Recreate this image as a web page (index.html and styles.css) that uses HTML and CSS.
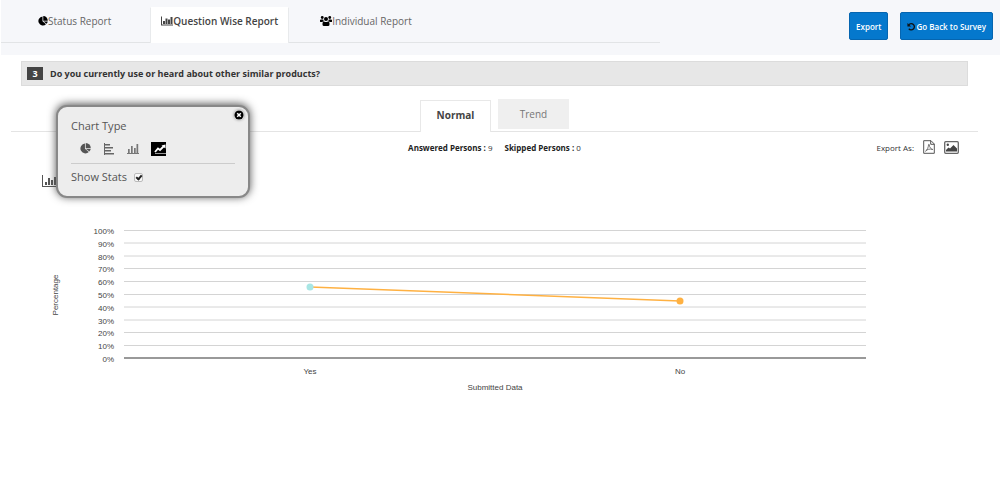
FILE: index.html
```html
<!DOCTYPE html>
<html lang="en">
<head>
<meta charset="utf-8">
<title>Question Wise Report</title>
<link rel="stylesheet" href="styles.css">
</head>
<body>
<header class="topbar">
  <nav class="tabs">
    <a class="tab" href="#status"><svg class="tab-icon" viewBox="0 0 20 20"><path d="M9 1a9 9 0 1 0 7 15.500L9 10.500z"/><path d="M10.500 0v9.500h9A9 9 0 0 0 10.500 0z"/><path d="M11 11l6 4.500a8 8 0 0 0 2.500-4.500z"/></svg><span>Status Report</span></a>
    <a class="tab active" href="#question" aria-current="page"><svg class="tab-icon wide" viewBox="0 0 24 20"><path d="M0 1h2v16h22v2H0zM4 10h4v6H4zM9 5h4v11H9zM14 7h4v9h-4zM19 2h4v14h-4z"/></svg><span>Question Wise Report</span></a>
    <a class="tab" href="#individual"><svg class="tab-icon wide" viewBox="0 0 24 20"><circle cx="4.500" cy="3" r="2.800"/><circle cx="19.500" cy="3" r="2.800"/><circle cx="12" cy="6" r="4"/><path d="M0 11V8.500Q0 7 2 7h4.500q0 2 1.500 3.500-2.500 0-3.500 1.500H1.500Q0 12 0 11zM24 11V8.500Q24 7 22 7h-4.500q0 2-1.500 3.500 2.500 0 3.500 1.500h3q1.500 0 1.500-1zM5 17v-2q0-4 3-4 4 2 8 0 3 0 3 4v2q0 3-3 3H8q-3 0-3-3z"/></svg><span>Individual Report</span></a>
  </nav>
  <div class="actions">
    <button class="btn" type="button">Export</button>
    <button class="btn" type="button"><svg class="undo" viewBox="0 0 20 20"><path d="M4 6a7 7 0 1 1 0 9" fill="none" stroke="#111" stroke-width="3"/><path d="M1 2v8h8z" fill="#111"/></svg>Go Back to Survey</button>
  </div>
</header>
<main>
  <h1 class="question"><span class="number">3</span>Do you currently use or heard about other similar products?</h1>
  <section class="report">
    <div class="views">
      <button class="view active" type="button">Normal</button>
      <button class="view" type="button">Trend</button>
    </div>
    <div class="summary">
      <p class="counts"><span><b>Answered Persons :</b> 9</span><span><b>Skipped Persons :</b> 0</span></p>
      <div class="export">
        <span>Export As:</span>
        <button class="icon-btn" type="button" aria-label="Export as PDF"><svg width="12" height="14" viewBox="0 0 12 14" fill="none" stroke="#555"><path d="M.7.7h7.300l3.300 3.300v9.300H.7zM7.700.7v3.600h3.600"/><path d="M2.500 11.200c1.500-.8 3-4 3-6.200 0-1 .8-1 .8 0 0 2 1.500 4 3.500 4.500M2.500 11.200C4 9.300 7 8.500 9.800 9.500" stroke-width=".8"/></svg></button>
        <button class="icon-btn" type="button" aria-label="Export as image"><svg width="15" height="13" viewBox="0 0 15 13"><rect x=".7" y=".7" width="13.600" height="11.600" rx="1" fill="#fff" stroke="#666" stroke-width="1.300"/><circle cx="3.800" cy="3.800" r="1.200" fill="#444"/><path d="M2 10.500V9L4.500 6.500 6 7.500 9.500 4 13 7.500v3z" fill="#444"/></svg></button>
      </div>
    </div>
    <div class="settings">
      <button class="icon-btn" type="button" aria-label="Chart settings"><svg width="18" height="14" viewBox="0 0 18 14" fill="#555"><path d="M0 1h1v11h17v1H0zM3 8h2v3H3zM6 4h2v7H6zM9 6h2v5H9zM12 3h2v8h-2zM15 1h2v10h-2z"/></svg></button>
      <div class="popover">
        <button class="close" type="button" aria-label="Close"><svg width="10" height="10" viewBox="0 0 10 10"><circle cx="5" cy="5" r="4.600" fill="#000"/><path d="M3.200 3.200l3.600 3.600M6.800 3.200L3.200 6.800" stroke="#fff" stroke-width="1.500"/></svg></button>
        <h2 class="popover-title">Chart Type</h2>
        <div class="types">
          <button class="type" type="button" aria-label="Pie"><svg width="11" height="11" viewBox="0 0 20 20" fill="#555"><path d="M9 1a9 9 0 1 0 7 15.500L9 10.500z"/><path d="M10.500 0v9.500h9A9 9 0 0 0 10.500 0z"/><path d="M11 11l6 4.500a8 8 0 0 0 2.500-4.500z"/></svg></button>
          <button class="type" type="button" aria-label="Bar"><svg width="10" height="12" viewBox="0 0 10 12" fill="#666"><path d="M0 0h1v12H0zM1 1h5v1.500H1zM1 4h8v1.500H1zM1 7h6v1.500H1zM1 10h9v1.500H1z"/></svg></button>
          <button class="type" type="button" aria-label="Column"><svg width="12" height="10" viewBox="0 0 12 10" fill="#777"><path d="M0 9h12v1H0zM1 5h1.700v4H1zM4 2h1.700v7H4zM7 4h1.700v5H7zM9.500 0h1.700v9H9.500z"/></svg></button>
          <button class="type selected" type="button" aria-label="Line" aria-pressed="true"><svg width="15" height="13" viewBox="0 0 15 13"><path d="M4 12V11h11v1z" fill="#999"/><path d="M4 10l3-3.500 2 1.500 4-4" fill="none" stroke="#fff" stroke-width="1.800"/><path d="M10.500 3.500L14.500 2.500v4z" fill="#fff"/></svg></button>
        </div>
        <label class="stats">Show Stats <input class="check" type="checkbox" checked></label>
      </div>
    </div>
  </section>
  <svg class="chart" viewBox="0 0 1000 200" role="img" aria-label="Percentage by submitted data">
    <path class="grid" d="M124 30.500H866M124 43H866M124 56H866M124 68.500H866M124 81.500H866M124 94.500H866M124 107H866M124 120H866M124 132.500H866M124 145.500H866"/>
    <path class="axis" d="M124 158H866"/>
    <g class="y-labels">
      <text x="114" y="34">100%</text><text x="114" y="47">90%</text><text x="114" y="60">80%</text><text x="114" y="72">70%</text><text x="114" y="85">60%</text><text x="114" y="98">50%</text><text x="114" y="111">40%</text><text x="114" y="124">30%</text><text x="114" y="136">20%</text><text x="114" y="149">10%</text><text x="114" y="162">0%</text>
    </g>
    <g class="x-labels">
      <text x="310" y="174">Yes</text><text x="680" y="174">No</text><text x="495" y="190">Submitted Data</text>
      <text transform="translate(58 95) rotate(-90)">Percentage</text>
    </g>
    <path class="line" d="M310 87L680 101" stroke-width="1.500"/>
    <circle cx="310" cy="87" r="3.500" fill="#a8e6e4"/>
    <circle cx="680" cy="101" r="3.500" fill="#ffb142"/>
  </svg>
</main>
</body>
</html>
```
FILE: styles.css
```css
*, *::before { box-sizing: border-box; }
body { margin: 0; background: #fff; color: #444; font-family: "Open Sans", sans-serif; font-size: 10px; }
button { font-family: inherit; cursor: pointer; }
svg { display: block; flex: none; }

.topbar { display: flex; justify-content: space-between; align-items: flex-start; margin-left: 1px; padding: 7px 7px 12px 0; background: #f6f7fa; }
.tabs { display: flex; flex: 0 1 659px; border-bottom: 1px solid #e2e4e6; }
.tab { display: flex; align-items: center; height: 35px; padding: 0 37px 7px; color: #666; text-decoration: none; white-space: nowrap; }
.tab.active { height: 36px; margin: 0 -6px -1px 2px; padding: 0 10px 10px; border: 1px solid #e8eaec; border-top-color: #fff; border-bottom: 0; background: #fff; color: #444; font-weight: 600; }
.tab-icon { width: 10px; height: 10px; fill: #000; }
.tab-icon.wide { width: 12px; }
.tab.active .tab-icon { fill: #444; }
.actions { display: flex; gap: 12px; padding-top: 5px; }
.btn { display: flex; align-items: center; height: 28px; padding: 0 6px; border: 1px solid #0565b0; border-radius: 2px; background: #0578cd; color: #fff; font-size: 8px; font-weight: 600; white-space: nowrap; }
.undo { width: 9px; height: 9px; }

.question { display: flex; align-items: center; gap: 7px; height: 25px; margin: 6px 32px 0 21px; padding: 0 5px; border: 1px solid #dcdcdc; background: #e7e7e7; color: #333; font-size: 9px; font-weight: 700; }
.number { width: 16px; background: #444; color: #fff; line-height: 13px; text-align: center; }

.report { position: relative; margin: 13px 22px 0 11px; }
.views { display: flex; justify-content: center; gap: 7px; height: 33px; border-bottom: 1px solid #e4e4e4; }
.view { width: 71px; height: 30px; padding: 0; border: 0; background: #efefef; color: #777; font-size: 10px; }
.view.active { height: 32px; margin-top: 1px; padding-bottom: 4px; border: 1px solid #e8e8e8; border-bottom: 0; background: #fff; color: #444; font-weight: 700; }
.summary { display: grid; grid-template-columns: 1fr auto 1fr; align-items: center; height: 30px; color: #333; font-size: 8px; }
.counts { display: flex; gap: 12px; grid-column: 2; margin: 0; }
.counts b { color: #222; }
.export { display: flex; justify-self: end; align-items: center; gap: 9px; padding-right: 19px; }
.icon-btn { padding: 0; border: 0; background: none; }
.settings { padding: 12px 31px 0; }

.popover { position: absolute; top: 6px; left: 45px; width: 194px; padding: 11px 13px; border: 2px solid #888; border-radius: 11px; background: #ededed; box-shadow: 0 -1px 8px #555; color: #555; }
.close { position: absolute; top: 3px; right: 4px; padding: 0; border: 0; border-radius: 50%; background: #fff; box-shadow: 0 0 3px #888; }
.popover-title { margin: 0; font-size: 11px; font-weight: 400; line-height: 16px; }
.types { display: flex; align-items: center; gap: 12px; height: 30px; padding: 0 8px; border-bottom: 1px solid #ccc; }
.type { display: grid; place-items: center; width: 12px; height: 15px; padding: 0; border: 0; background: none; }
.type.selected { width: 15px; height: 14px; background: #000; }
.stats { display: flex; align-items: center; gap: 7px; padding-top: 5px; font-size: 11px; line-height: 16px; }
.check { appearance: none; display: grid; place-items: center; width: 9px; height: 9px; margin: 0; border: 1px solid #bbb; border-radius: 2px; background: #f8f8f8; }
.check:checked::before { content: ""; width: 4px; height: 6px; border: solid #222; border-width: 0 2px 2px 0; transform: rotate(40deg); }

.chart { width: 100%; height: auto; margin-top: 9px; font-family: "Liberation Sans", sans-serif; font-size: 8px; fill: #444; }
.grid { stroke: #d4d4d4; stroke-width: 1; }
.axis { stroke: #999; stroke-width: 2; }
.y-labels { text-anchor: end; }
.x-labels { text-anchor: middle; }
.line { stroke: #ffb142; }
```
